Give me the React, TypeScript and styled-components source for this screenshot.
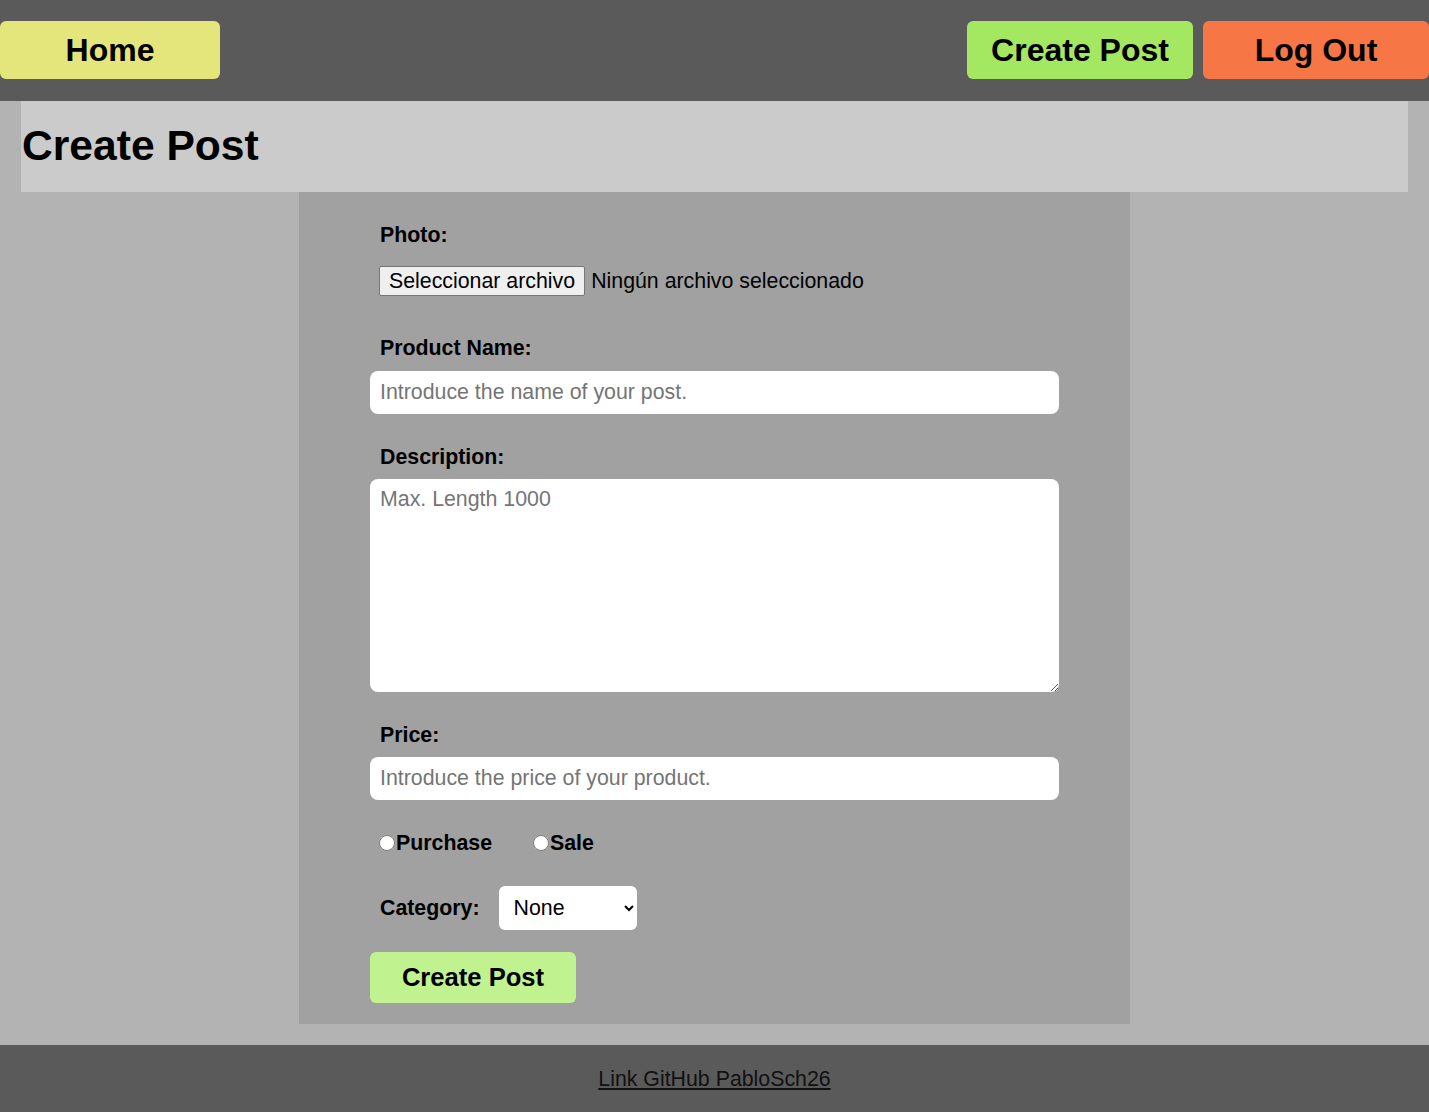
import React from "react";
import styled, { createGlobalStyle } from "styled-components";

const Global = createGlobalStyle`
  html, body { margin: 0; padding: 0; }
  body {
    background: #b3b3b3;
    font-family: "Liberation Sans", Arial, sans-serif;
    color: #000;
  }
  * { box-sizing: border-box; }
`;

const Page = styled.div`
  display: flex;
  flex-direction: column;
  min-height: 1112px;
`;

const Header = styled.header`
  background: #5a5a5a;
  height: 101px;
  display: flex;
  align-items: flex-start;
  justify-content: space-between;
  padding-top: 21px;
`;

const NavGroup = styled.div`
  display: flex;
  gap: 10px;
`;

const NavButton = styled.button<{ $bg: string; $w: number }>`
  background: ${(p) => p.$bg};
  width: ${(p) => p.$w}px;
  height: 58px;
  border: none;
  border-radius: 6px;
  font-family: "Liberation Sans", Arial, sans-serif;
  font-weight: bold;
  font-size: 32px;
  color: #000;
  padding: 0;
  cursor: pointer;
`;

const TitleBar = styled.div`
  background: #cbcbcb;
  margin: 0 21px;
  height: 91px;
  display: flex;
  align-items: center;
  padding-left: 1px;
  padding-bottom: 2px;
`;

const Title = styled.h1`
  margin: 0;
  font-size: 42.6px;
  font-weight: bold;
`;

const Main = styled.main`
  display: flex;
  justify-content: center;
  padding-bottom: 21px;
`;

const Panel = styled.form`
  background: #a1a1a1;
  width: 831px;
  padding: 31px 71px 21px;
  display: flex;
  flex-direction: column;
`;

const Label = styled.label`
  display: block;
  font-weight: bold;
  font-size: 21.33px;
  line-height: 24px;
  padding-left: 10px;
`;

const FileRow = styled.div`
  display: flex;
  align-items: center;
  gap: 6px;
  margin: 19px 0 40px 9px;
  font-size: 21.33px;
`;

const FileButton = styled.span`
  display: inline-flex;
  align-items: center;
  justify-content: center;
  height: 30px;
  padding: 0 9px;
  background: #efefef;
  border: 1px solid #767676;
  border-radius: 2px;
  font-size: 21.33px;
`;

const TextInput = styled.input<{ $top?: number }>`
  display: block;
  width: 100%;
  height: 43px;
  margin: ${(p) => p.$top ?? 11}px 0 31px;
  border: none;
  border-radius: 8px;
  background: #fff;
  padding: 0 10px;
  font-family: "Liberation Sans", Arial, sans-serif;
  font-size: 21.33px;
  outline: none;
  &::placeholder { color: #757575; }
`;

const TextArea = styled.textarea`
  display: block;
  width: 100%;
  height: 213px;
  margin: 10px 0 31px;
  border: none;
  border-radius: 8px;
  background: #fff;
  padding: 8px 10px;
  font-family: "Liberation Sans", Arial, sans-serif;
  font-size: 21.33px;
  outline: none;
  &::placeholder { color: #757575; }
`;

const RadioRow = styled.div`
  display: flex;
  align-items: center;
  gap: 41px;
  padding-left: 9px;
  height: 24px;
  margin-bottom: 31px;
`;

const RadioLabel = styled.label`
  display: flex;
  align-items: center;
  font-weight: bold;
  font-size: 21.33px;
`;

const Radio = styled.input`
  width: 16px;
  height: 16px;
  margin: 0 1px 0 0;
`;

const CategoryRow = styled.div`
  display: flex;
  align-items: center;
  gap: 19px;
  margin-bottom: 22px;
`;

const Select = styled.select`
  width: 138px;
  height: 44px;
  border: none;
  border-radius: 6px;
  background: #fff;
  padding: 0 8px 0 11px;
  font-family: "Liberation Sans", Arial, sans-serif;
  font-size: 21.33px;
  color: #000;
  outline: none;
`;

const SubmitButton = styled.button`
  width: 206px;
  height: 51px;
  border: none;
  border-radius: 6px;
  background: #c0f290;
  font-family: "Liberation Sans", Arial, sans-serif;
  font-weight: bold;
  font-size: 25.6px;
  color: #000;
  cursor: pointer;
`;

const Footer = styled.footer`
  background: #5a5a5a;
  height: 67px;
  display: flex;
  align-items: center;
  justify-content: center;
  margin-top: auto;
`;

const FooterLink = styled.a`
  color: #111;
  font-size: 21.33px;
  text-decoration: underline;
  margin-top: 2px;
`;

export default function App() {
  return (
    <Page>
      <Global />
      <Header>
        <NavButton $bg="#e4e57a" $w={220}>Home</NavButton>
        <NavGroup>
          <NavButton $bg="#a3e860" $w={226}>Create Post</NavButton>
          <NavButton $bg="#f77645" $w={226}>Log Out</NavButton>
        </NavGroup>
      </Header>
      <TitleBar>
        <Title>Create Post</Title>
      </TitleBar>
      <Main>
        <Panel onSubmit={(e) => e.preventDefault()}>
          <Label>Photo:</Label>
          <FileRow>
            <FileButton>Seleccionar archivo</FileButton>
            <span>Ningún archivo seleccionado</span>
          </FileRow>
          <Label>Product Name:</Label>
          <TextInput placeholder="Introduce the name of your post." />
          <Label>Description:</Label>
          <TextArea placeholder="Max. Length 1000" />
          <Label>Price:</Label>
          <TextInput $top={10} placeholder="Introduce the price of your product." />
          <RadioRow>
            <RadioLabel>
              <Radio type="radio" name="type" />
              Purchase
            </RadioLabel>
            <RadioLabel>
              <Radio type="radio" name="type" />
              Sale
            </RadioLabel>
          </RadioRow>
          <CategoryRow>
            <Label as="span">Category:</Label>
            <Select defaultValue="None">
              <option>None</option>
            </Select>
          </CategoryRow>
          <div>
            <SubmitButton type="submit">Create Post</SubmitButton>
          </div>
        </Panel>
      </Main>
      <Footer>
        <FooterLink href="#">Link GitHub PabloSch26</FooterLink>
      </Footer>
    </Page>
  );
}
